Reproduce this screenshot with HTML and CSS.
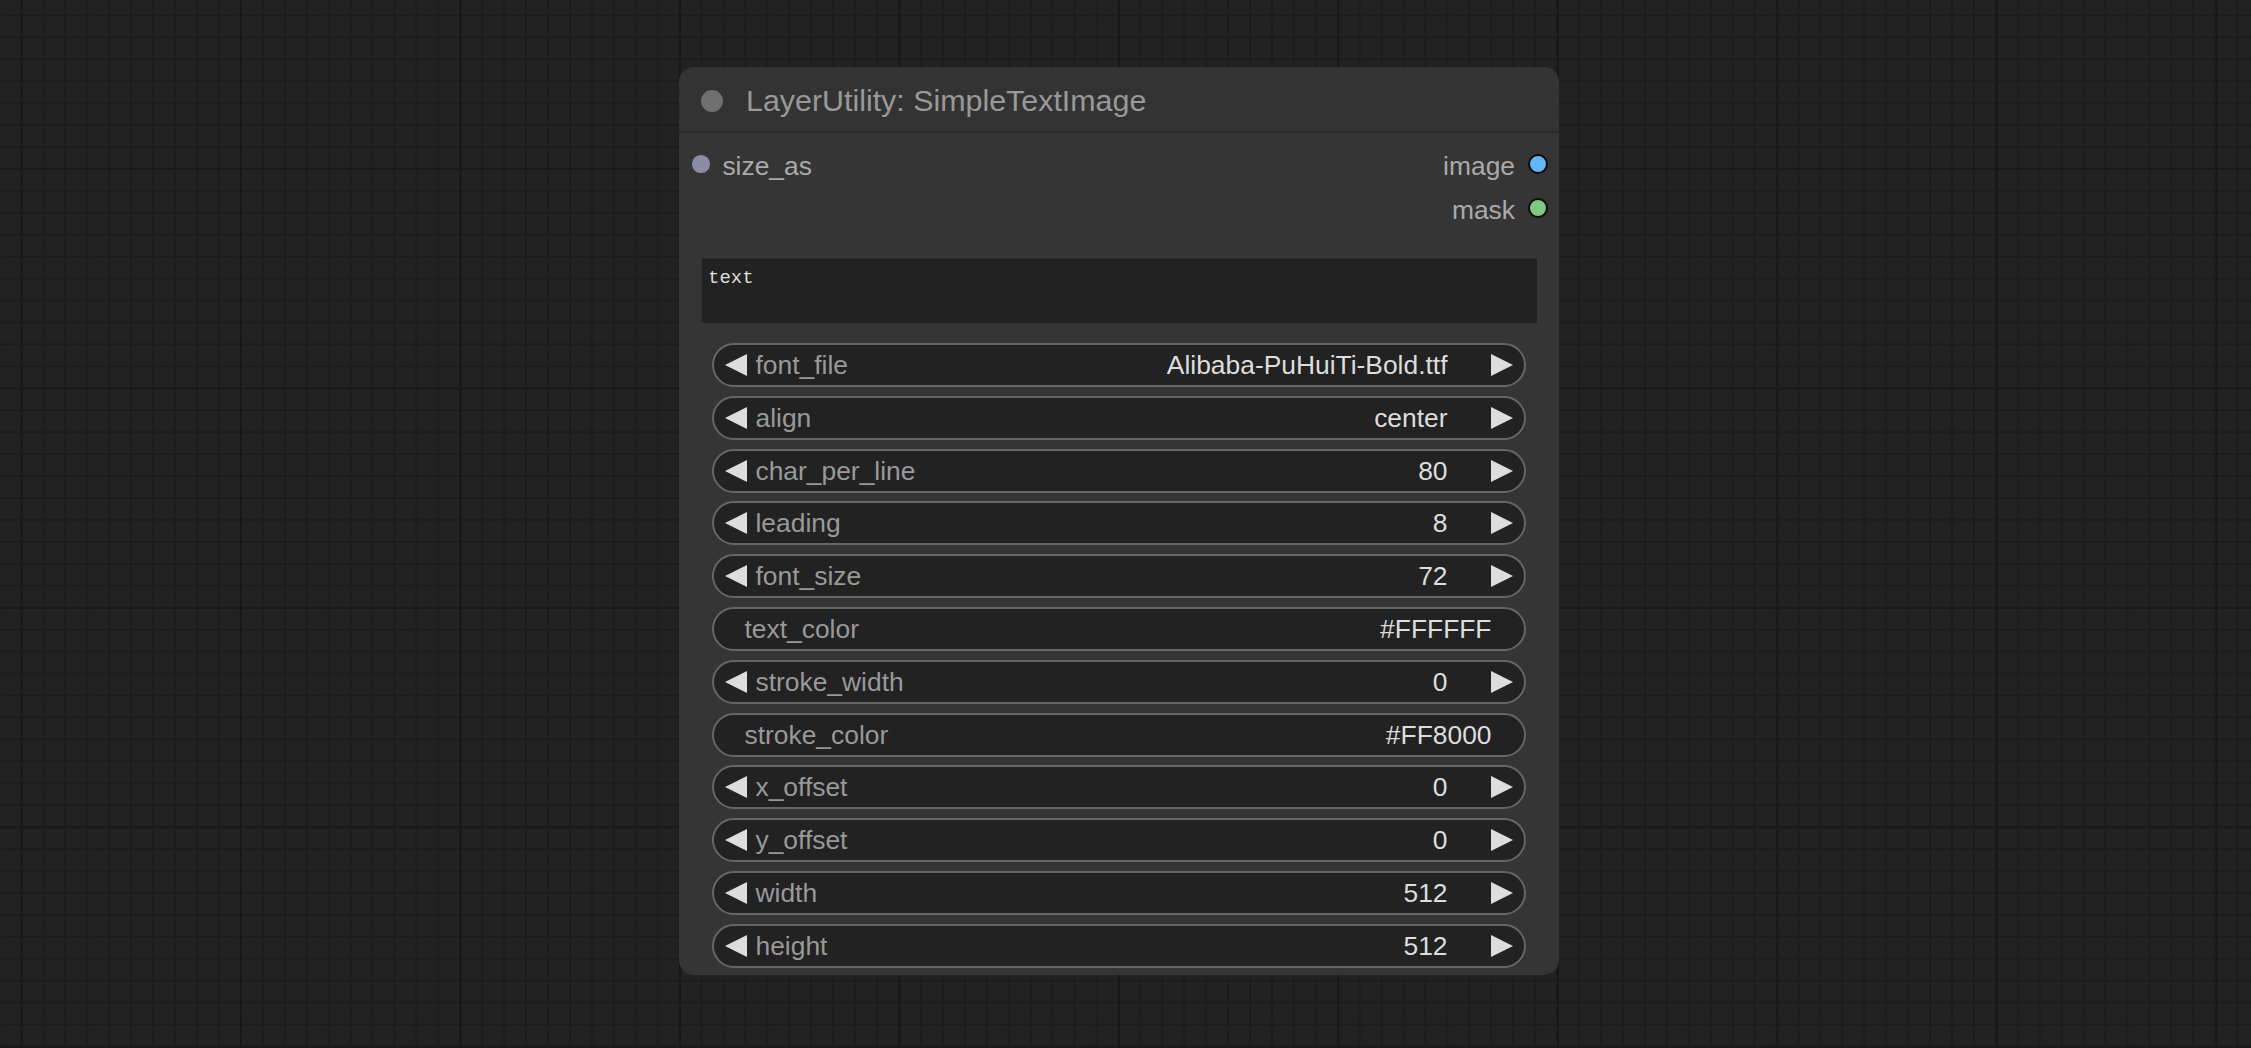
FILE: index.html
```html
<!DOCTYPE html>
<html lang="en">
<head>
<meta charset="utf-8">
<title>LayerUtility: SimpleTextImage</title>
<link rel="stylesheet" href="styles.css">
</head>
<body>
<main class="canvas">
  <section class="node">
    <header class="node-title">
      <span class="title-dot"></span>
      <span class="title-text">LayerUtility: SimpleTextImage</span>
    </header>
    <div class="node-body">
      <div class="slots">
        <div class="slot-row">
          <div class="slot-in"><span class="dot dot-any"></span><span class="slot-label">size_as</span></div>
          <div class="slot-out"><span class="slot-label">image</span><span class="dot dot-out dot-image"></span></div>
        </div>
        <div class="slot-row">
          <div class="slot-in"></div>
          <div class="slot-out"><span class="slot-label">mask</span><span class="dot dot-out dot-mask"></span></div>
        </div>
      </div>
      <textarea class="multiline" readonly>text</textarea>
      <div class="widgets">
        <div class="widget"><svg class="arrow" viewBox="0 0 22 22"><polygon points="22,0 0,11 22,22"/></svg><span class="label">font_file</span><span class="value">Alibaba-PuHuiTi-Bold.ttf</span><svg class="arrow" viewBox="0 0 22 22"><polygon points="0,0 22,11 0,22"/></svg></div>
        <div class="widget"><svg class="arrow" viewBox="0 0 22 22"><polygon points="22,0 0,11 22,22"/></svg><span class="label">align</span><span class="value">center</span><svg class="arrow" viewBox="0 0 22 22"><polygon points="0,0 22,11 0,22"/></svg></div>
        <div class="widget"><svg class="arrow" viewBox="0 0 22 22"><polygon points="22,0 0,11 22,22"/></svg><span class="label">char_per_line</span><span class="value">80</span><svg class="arrow" viewBox="0 0 22 22"><polygon points="0,0 22,11 0,22"/></svg></div>
        <div class="widget"><svg class="arrow" viewBox="0 0 22 22"><polygon points="22,0 0,11 22,22"/></svg><span class="label">leading</span><span class="value">8</span><svg class="arrow" viewBox="0 0 22 22"><polygon points="0,0 22,11 0,22"/></svg></div>
        <div class="widget"><svg class="arrow" viewBox="0 0 22 22"><polygon points="22,0 0,11 22,22"/></svg><span class="label">font_size</span><span class="value">72</span><svg class="arrow" viewBox="0 0 22 22"><polygon points="0,0 22,11 0,22"/></svg></div>
        <div class="widget widget-text"><span class="label">text_color</span><span class="value">#FFFFFF</span></div>
        <div class="widget"><svg class="arrow" viewBox="0 0 22 22"><polygon points="22,0 0,11 22,22"/></svg><span class="label">stroke_width</span><span class="value">0</span><svg class="arrow" viewBox="0 0 22 22"><polygon points="0,0 22,11 0,22"/></svg></div>
        <div class="widget widget-text"><span class="label">stroke_color</span><span class="value">#FF8000</span></div>
        <div class="widget"><svg class="arrow" viewBox="0 0 22 22"><polygon points="22,0 0,11 22,22"/></svg><span class="label">x_offset</span><span class="value">0</span><svg class="arrow" viewBox="0 0 22 22"><polygon points="0,0 22,11 0,22"/></svg></div>
        <div class="widget"><svg class="arrow" viewBox="0 0 22 22"><polygon points="22,0 0,11 22,22"/></svg><span class="label">y_offset</span><span class="value">0</span><svg class="arrow" viewBox="0 0 22 22"><polygon points="0,0 22,11 0,22"/></svg></div>
        <div class="widget"><svg class="arrow" viewBox="0 0 22 22"><polygon points="22,0 0,11 22,22"/></svg><span class="label">width</span><span class="value">512</span><svg class="arrow" viewBox="0 0 22 22"><polygon points="0,0 22,11 0,22"/></svg></div>
        <div class="widget"><svg class="arrow" viewBox="0 0 22 22"><polygon points="22,0 0,11 22,22"/></svg><span class="label">height</span><span class="value">512</span><svg class="arrow" viewBox="0 0 22 22"><polygon points="0,0 22,11 0,22"/></svg></div>
      </div>
    </div>
  </section>
</main>
</body>
</html>
```
FILE: styles.css
```css
html, body {
  margin: 0;
  padding: 0;
  height: 100%;
}

body {
  overflow: hidden;
  background-color: #222222;
  background-image:
    linear-gradient(to right, #171717 2px, transparent 2px),
    linear-gradient(to bottom, #191919 2px, transparent 2px),
    linear-gradient(to right, #1c1c1c 2px, transparent 2px),
    linear-gradient(to bottom, #1c1c1c 2px, transparent 2px);
  background-size:
    219.5px 100%,
    100% 219.5px,
    21.95px 100%,
    100% 21.95px;
  background-position:
    20.5px 0,
    0 168px,
    20.5px 0,
    0 14.35px;
  font-family: "Liberation Sans", Arial, sans-serif;
}

.canvas {
  padding: 67px 0 0 679px;
}

.node {
  width: 880px;
  background: #353535;
  border-radius: 15px;
  overflow: hidden;
}

.node-title {
  box-sizing: border-box;
  height: 66px;
  padding: 3px 0 0 22px;
  display: flex;
  align-items: center;
  background: #333333;
  border-bottom: 2px solid #2a2a2a;
}

.title-dot {
  width: 22px;
  height: 22px;
  border-radius: 50%;
  background: #6f6f6f;
  flex: none;
}

.title-text {
  margin-left: 23px;
  font-size: 30.4px;
  color: #999999;
  white-space: nowrap;
}

.node-body {
  padding: 11px 0 7.2px 0;
}

.slots {
  display: flex;
  flex-direction: column;
}

.slot-row {
  height: 44px;
  display: flex;
  align-items: center;
  justify-content: space-between;
  padding: 0 11.5px 0 13.2px;
}

.slot-in, .slot-out {
  display: flex;
  align-items: center;
}

.slot-label {
  font-size: 26.4px;
  line-height: 44px;
  color: #aaaaaa;
  white-space: nowrap;
}

.dot {
  flex: none;
  border-radius: 50%;
  margin-bottom: 4px;
  box-sizing: border-box;
}

.dot-any {
  width: 17.6px;
  height: 17.6px;
  background: #8b8ba6;
  margin-right: 12.6px;
}

.dot-out {
  width: 20px;
  height: 20px;
  border: 2px solid #0a0a0a;
  margin-left: 12.5px;
}

.dot-image {
  background: #64b5f6;
}

.dot-mask {
  background: #81c784;
}

.multiline {
  display: block;
  box-sizing: border-box;
  margin: 26.3px 0 0 23px;
  width: 835px;
  height: 65px;
  padding: 8px 6px 0 6px;
  border: none;
  border-top: 1px solid #2a2a2a;
  outline: none;
  resize: none;
  overflow: hidden;
  background: #222222;
  color: #dddddd;
  font-family: "Liberation Mono", "DejaVu Sans Mono", monospace;
  font-size: 19px;
  line-height: 1.2;
}

.widgets {
  margin: 19.7px 0 0 32.5px;
  width: 814px;
  display: flex;
  flex-direction: column;
  gap: 8.8px;
}

.widget {
  box-sizing: border-box;
  height: 44px;
  display: flex;
  align-items: center;
  padding: 0 11px;
  border: 2px solid #666666;
  border-radius: 22px;
  background: #222222;
  font-size: 26.4px;
  line-height: 40px;
  white-space: nowrap;
}

.arrow {
  width: 22px;
  height: 22px;
  flex: none;
  fill: #dddddd;
}

.label {
  flex: 1;
  margin-left: 9px;
  color: #999999;
}

.value {
  margin-right: 43px;
  color: #dddddd;
}

.widget-text {
  padding: 0 31px;
}

.widget-text .label {
  margin-left: 0;
}

.widget-text .value {
  margin-right: 1px;
}
```
